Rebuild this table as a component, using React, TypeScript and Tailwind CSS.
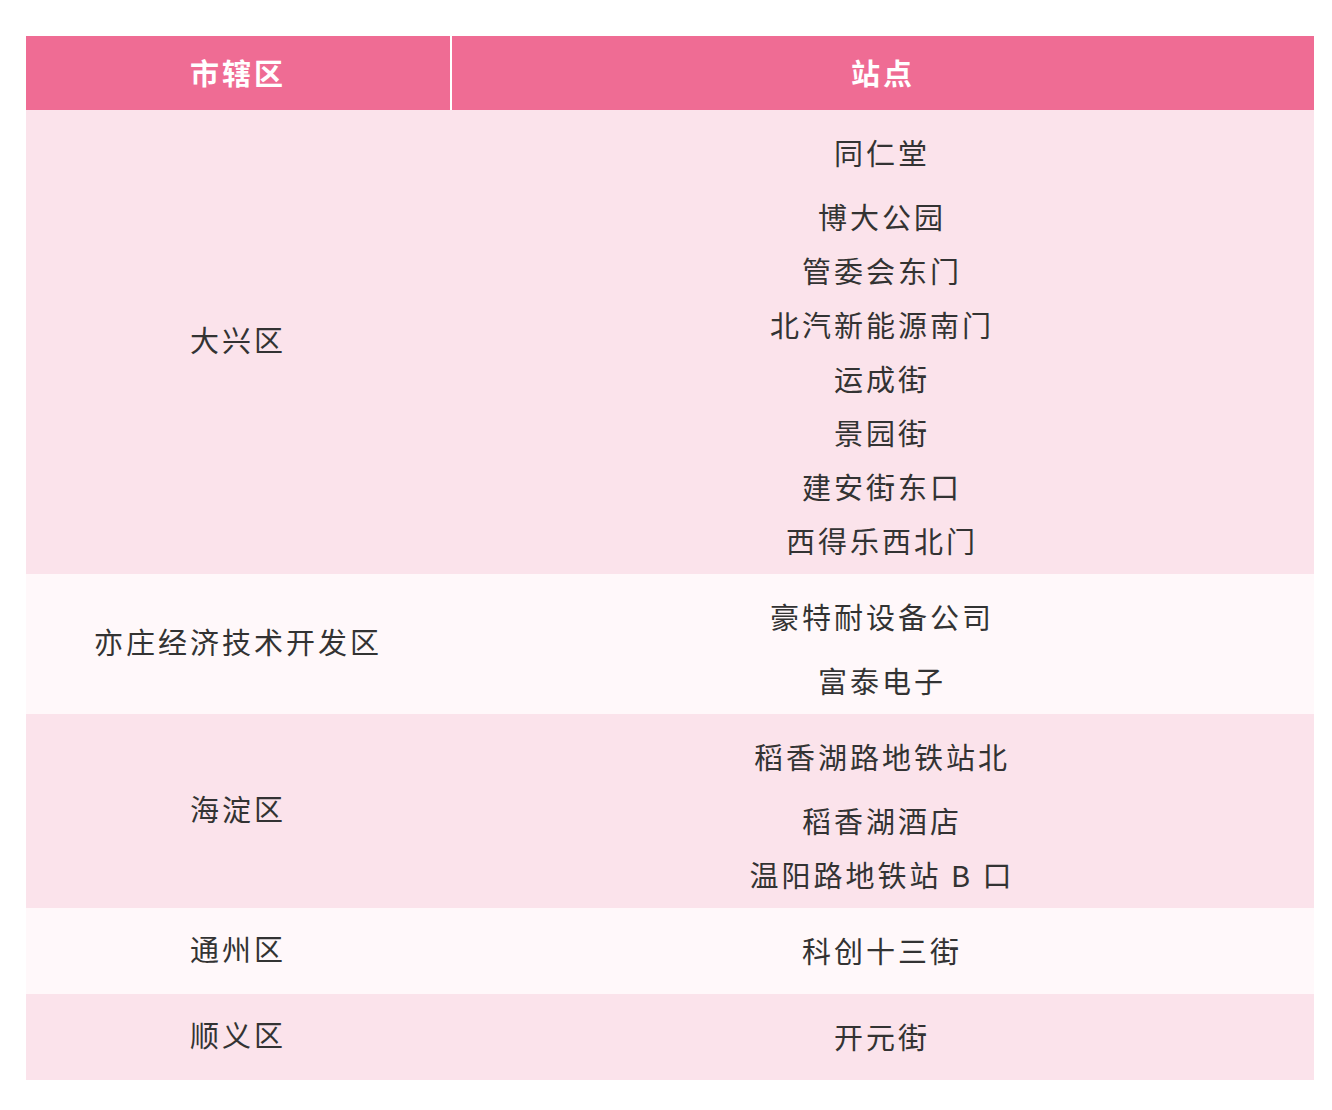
import React from "react";

/* ------------------------------------------------------------------ */
/*  Station data                                                       */
/* ------------------------------------------------------------------ */
const ROWS = [
  {
    district: "大兴区",
    groups: [["同仁堂"], ["博大公园", "管委会东门", "北汽新能源南门", "运成街", "景园街", "建安街东口", "西得乐西北门"]],
  },
  {
    district: "亦庄经济技术开发区",
    groups: [["豪特耐设备公司"], ["富泰电子"]],
  },
  {
    district: "海淀区",
    groups: [["稻香湖路地铁站北"], ["稻香湖酒店", "温阳路地铁站 B 口"]],
  },
  { district: "通州区", groups: [["科创十三街"]] },
  { district: "顺义区", groups: [["开元街"]] },
];

const font = { fontFamily: '"Noto Sans CJK SC", "Noto Sans", sans-serif' };

export default function App() {
  return (
    <div className="min-h-[1110px] w-full bg-white pt-[36px] pl-[26px]" style={font}>
      <div className="w-[1288px]">
        {/* Header */}
        <div className="flex h-[74px] bg-[#ef6c94] text-[29px] font-bold tracking-[3px] text-white">
          <div className="flex w-[426px] items-center justify-center border-r-2 border-white">市辖区</div>
          <div className="flex flex-1 items-center justify-center">站点</div>
        </div>

        {/* Body */}
        {ROWS.map((row, i) => {
          const multi = row.groups.length > 1;
          return (
            <div
              key={i}
              className={`flex text-[29px] tracking-[3px] text-[#333333] ${i % 2 === 0 ? "bg-[#fbe3eb]" : "bg-[#fff8fa]"}`}
            >
              <div className="flex w-[424px] items-center justify-center pb-[4px]">{row.district}</div>
              <div className={`flex flex-1 flex-col items-center ${multi ? "pt-[15px] pb-[7px]" : "pt-[15px] pb-[17px]"}`}>
                {row.groups.map((g, gi) => (
                  <div key={gi} className={gi > 0 ? "mt-[10px]" : ""}>
                    {g.map((s) => (
                      <p key={s} className="h-[54px] text-center leading-[54px]">
                        {s}
                      </p>
                    ))}
                  </div>
                ))}
              </div>
            </div>
          );
        })}
      </div>
    </div>
  );
}
